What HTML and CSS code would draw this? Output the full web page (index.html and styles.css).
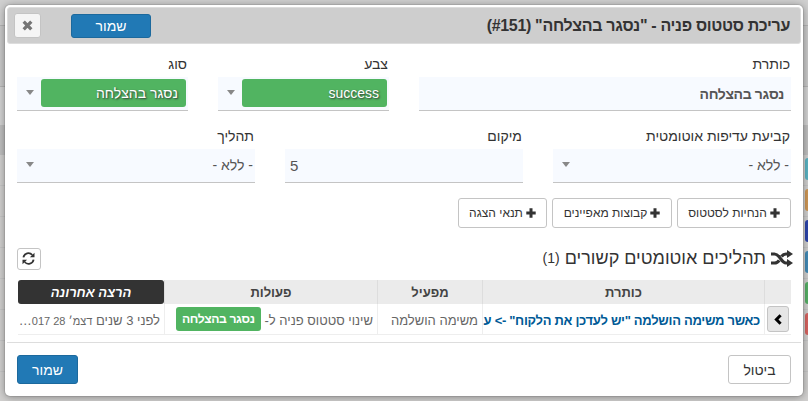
FILE: index.html
```html
<!DOCTYPE html>
<html lang="he" dir="rtl">
<head>
<meta charset="utf-8">
<title>עריכת סטטוס פניה</title>
<link rel="stylesheet" href="styles.css">
</head>
<body>
<div class="backdrop">
  <div class="band band-top"></div>
  <div class="band band-bar"></div>
  <div class="band band-gap"></div>
  <div class="band band-head"></div>
  <div class="line"><i class="pill teal"></i></div>
  <div class="line"><i class="pill orange"></i></div>
  <div class="line"><i class="pill navy"></i></div>
  <div class="line"><i class="pill blue"></i></div>
  <div class="line"><i class="pill green"></i></div>
  <div class="line"><i class="pill red"></i></div>
  <div class="line"></div>
  <div class="line"></div>
</div>
<main class="dialog">
  <header class="titlebar">
    <h1>עריכת סטטוס פניה - "נסגר בהצלחה" (<bdi>#151</bdi>)</h1>
    <button class="btn primary save-top">שמור</button>
    <button class="btn close"><svg width="11" height="11" viewBox="0 0 11 11"><path d="M1.7 1.7 9.3 9.3M9.3 1.7 1.7 9.3" stroke="#757575" stroke-width="3.3"/></svg></button>
  </header>
  <section class="row row-one">
    <div class="field"><label>כותרת</label><div class="control text strong">נסגר בהצלחה</div></div>
    <div class="field"><label>צבע</label><div class="control tagged"><span class="tag">success</span><i class="caret"></i></div></div>
    <div class="field"><label>סוג</label><div class="control tagged"><span class="tag">נסגר בהצלחה</span><i class="caret"></i></div></div>
  </section>
  <section class="row row-two">
    <div class="field"><label>קביעת עדיפות אוטומטית</label><div class="control select"><span>- ללא -</span><i class="caret"></i></div></div>
    <div class="field"><label>מיקום</label><div class="control text number">5</div></div>
    <div class="field"><label>תהליך</label><div class="control select"><span>- ללא -</span><i class="caret"></i></div></div>
  </section>
  <div class="adders">
    <button class="btn add add-a"><svg width="10" height="10" viewBox="0 0 10 10"><path d="M5 .3V9.7M.3 5H9.7" stroke="#333" stroke-width="3"/></svg>הנחיות לסטטוס</button>
    <button class="btn add add-b"><svg width="10" height="10" viewBox="0 0 10 10"><path d="M5 .3V9.7M.3 5H9.7" stroke="#333" stroke-width="3"/></svg>קבוצות מאפיינים</button>
    <button class="btn add add-c"><svg width="10" height="10" viewBox="0 0 10 10"><path d="M5 .3V9.7M.3 5H9.7" stroke="#333" stroke-width="3"/></svg>תנאי הצגה</button>
  </div>
  <div class="subhead">
    <h2><svg width="22" height="17" viewBox="0 0 22 17"><path d="M0 4H3.5C9 4 10 13 15 13H17M0 13H3.5C6 13 7 12 8.2 10.3M10.5 6.5C12 4.5 13 4 15 4H17" fill="none" stroke="#333" stroke-width="3.2"/><path d="M16 0 22 4 16 8ZM16 9 22 13 16 17Z" fill="#333"/></svg>תהליכים אוטומטים קשורים <small>(1)</small></h2>
    <button class="btn refresh"><svg width="13" height="13" viewBox="0 0 13 13"><path d="M1.4 5.4A5.1 5.1 0 0 1 10.3 3M11.6 7.6A5.1 5.1 0 0 1 2.7 10" fill="none" stroke="#333" stroke-width="1.8"/><path d="M12.5.7V5.3H7.9ZM.5 12.3V7.7H5.1Z" fill="#333"/></svg></button>
  </div>
  <div class="grid">
    <div class="th"></div><div class="th">כותרת</div><div class="th">מפעיל</div><div class="th">פעולות</div><div class="th sorted">הרצה אחרונה</div>
    <div class="td"><button class="btn expand"><svg width="8" height="11" viewBox="0 0 8 11"><path d="M6.6 1.2 2.4 5.5 6.6 9.8" fill="none" stroke="#000" stroke-width="3"/></svg></button></div>
    <div class="td link">כאשר משימה הושלמה "יש לעדכן את הלקוח" -&gt; ע</div>
    <div class="td">משימה הושלמה</div>
    <div class="td status"><span>שינוי סטטוס פניה ל-</span><span class="label">נסגר בהצלחה</span></div>
    <div class="td date">לפני 3 שנים <small>דצמ׳ 28 017</small>…</div>
  </div>
  <footer class="actions"><button class="btn cancel">ביטול</button><button class="btn primary save">שמור</button></footer>
</main>
</body>
</html>
```
FILE: styles.css
```css
* { box-sizing: border-box; }
body { margin: 0; height: 401px; overflow: hidden; padding: 5px 5px 0 5px; background: #d1d0cf; color: #333; font: 14px/20px "Liberation Sans", Arial, sans-serif; }
.backdrop { position: absolute; inset: 0; }
.band { border-bottom: 1px solid #b5b5b5; }
.band-top { height: 26px; background: #d0d0d0; }
.band-bar { height: 61px; background: #c9c9c9; }
.band-gap { height: 38px; background: #d3d3d3; border: 0; }
.band-head { height: 30px; background: #bfbfbf; border: 0; }
.line { height: 31px; border-bottom: 1px solid #c6c6c6; direction: ltr; padding: 3px 0 0 805px; }
.pill { display: block; width: 12px; height: 22px; border-radius: 3px; }
.teal { background: #5ab3c3; } .orange { background: #cf9755; } .navy { background: #2c44ab; }
.blue { background: #428ab6; } .green { background: #55af65; } .red { background: #d66360; }
.dialog { position: relative; width: 798px; height: 391px; padding: 2px; background: #fff; border-radius: 5px; box-shadow: 0 0 0 1px rgba(0,0,0,.08), 0 1px 8px rgba(0,0,0,.38); }
.btn { display: flex; align-items: center; justify-content: center; margin: 0; padding: 0; border: 1px solid #c4c4c4; border-radius: 3px; background: #fff; color: #333; font: inherit; }
.primary { background: #2179b5; border-color: #1c699d; color: #fff; }
.titlebar { display: flex; align-items: center; height: 37px; padding: 0 10px 0 6px; border: 1px solid #ddd; border-radius: 3px; background: #cecece; }
h1 { margin: 0 0 0 auto; font-size: 16px; line-height: 20px; letter-spacing: -.32px; }
.save-top { width: 80px; height: 24px; margin: 0 0 0 30px; }
.close { width: 27px; height: 25px; background: #f5f5f5; }
.row { display: flex; justify-content: space-between; margin: 0 10px; }
.row-one { margin-top: 10px; } .row-two { margin-top: 15px; }
.row-one .field { width: 171px; } .row-one .field:first-child { width: 372px; }
.row-two .field { width: 238px; }
label { display: block; height: 23px; padding-right: 1px; line-height: 20px; font-size: 14px; }
.control { display: flex; align-items: center; height: 34px; background: #f7faff; border-bottom: 1px solid #c4c4c4; color: #555; }
.text { padding: 0 7px; } .strong { font-weight: bold; letter-spacing: -.36px; }
.number { justify-content: flex-end; padding: 0 5px; font-size: 15px; }
.select { padding: 0 2px 2px 9px; justify-content: space-between; }
.tagged { padding: 0 2px 2px 9px; justify-content: space-between; }
.tag { width: 145px; height: 28px; padding-right: 8px; line-height: 28px; color: #fff; background: #51b461; border-radius: 3px; text-shadow: 1px 1px 2px #333; }
.caret { width: 0; height: 0; border: 4px solid transparent; border-top: 5px solid #888; border-bottom: 0; }
.adders { display: flex; gap: 5px; margin: 15px 10px 0; }
.add { height: 30px; gap: 3px; font-size: 12px; }
.add-a { width: 114px; } .add-b { width: 120px; } .add-c { width: 89px; }
.subhead { display: flex; justify-content: space-between; height: 41px; margin: 15px 8px 0 10px; padding-top: 5px; }
h2 { display: flex; align-items: center; height: 20px; margin: 0; font-size: 18px; font-weight: normal; line-height: 20px; gap: 5px; }
h2 small { font-size: 14px; }
.refresh { width: 24px; height: 22px; padding: 0 0 1px 1px; direction: ltr; }
.refresh svg { margin-right: 2px; }
.grid { display: grid; grid-template-columns: 27px 282px 105px 213px 146px; grid-template-rows: 24px 31px; width: 773px; margin: -4px 10px 0 11px; }
.th { background: #ebebeb; border-left: 1px solid #ddd; text-align: center; font-weight: bold; font-size: 13px; line-height: 25px; color: #444; }
.th.sorted { background: #333; border: 0; border-radius: 3px; color: #fff; font-style: italic; }
.td { min-width: 0; border-bottom: 1px solid #eee; border-left: 1px solid #eee; padding: 0 4px; font-size: 13px; line-height: 33px; color: #666; white-space: nowrap; overflow: hidden; }
.td.link { padding-left: 0; color: #005a96; font-weight: bold; letter-spacing: -.3px; }
.td.date { border-left: 0; padding-left: 0; } .date small { font-size: 11px; }
.expand { width: 22px; height: 26px; margin: 2px -2px 0 0; background: #e6e6e6; }
.status { display: flex; align-items: flex-start; gap: 4px; }
.label { height: 24px; margin-top: 3px; padding: 0 6px; border-radius: 3px; background: #51b461; color: #fff; font-weight: bold; font-size: 12.2px; line-height: 24px; letter-spacing: -.4px; }
.actions { display: flex; justify-content: space-between; height: 52px; margin-top: 7px; padding: 12px 10px 0; border-top: 1px solid #ddd; }
.actions .btn { height: 29px; } .save { width: 61px; } .cancel { width: 63px; }
```
